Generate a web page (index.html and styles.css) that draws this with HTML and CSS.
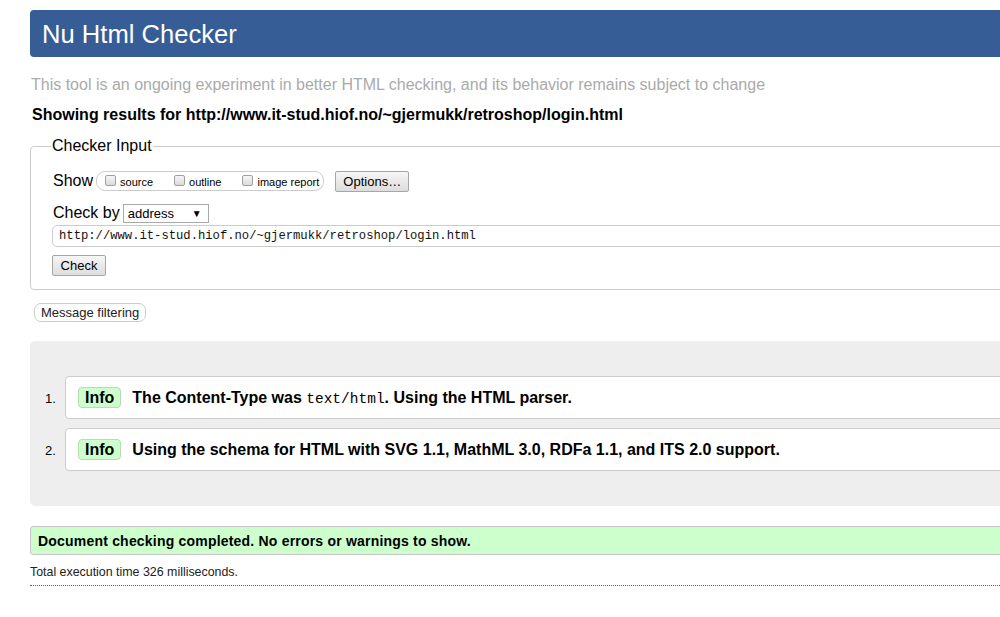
FILE: index.html
```html
<!DOCTYPE html>
<html>
<head>
<meta charset="utf-8">
<title>Nu Html Checker</title>
<link rel="stylesheet" href="styles.css">
</head>
<body>
<div class="page">
  <h1 class="title">Nu Html Checker</h1>
  <p class="subtitle">This tool is an ongoing experiment in better HTML checking, and its behavior remains subject to change</p>
  <p class="showing">Showing results for http://www.it-stud.hiof.no/~gjermukk/retroshop/login.html</p>

  <fieldset class="input-box">
    <legend class="legend">Checker Input</legend>
    <div class="row show-row">
      <span class="row-label">Show</span>
      <span class="pill">
        <label class="opt"><input type="checkbox" class="cb">source</label>
        <label class="opt"><input type="checkbox" class="cb">outline</label>
        <label class="opt"><input type="checkbox" class="cb">image report</label>
      </span>
      <button class="btn options-btn">Options…</button>
    </div>
    <div class="row checkby-row">
      <span class="row-label">Check by</span>
      <span class="select"><span class="select-text">address</span><span class="select-arrow">▼</span></span>
    </div>
    <div class="url-input">http://www.it-stud.hiof.no/~gjermukk/retroshop/login.html</div>
    <button class="btn check-btn">Check</button>
  </fieldset>

  <button class="filter-btn">Message filtering</button>

  <div class="results">
    <ol class="messages">
      <li class="msg"><span class="num">1.</span><div class="msg-box"><span class="badge">Info</span><span class="msg-text">The Content-Type was <code class="code">text/html</code>. Using the HTML parser.</span></div></li>
      <li class="msg"><span class="num">2.</span><div class="msg-box"><span class="badge">Info</span><span class="msg-text">Using the schema for HTML with SVG 1.1, MathML 3.0, RDFa 1.1, and ITS 2.0 support.</span></div></li>
    </ol>
  </div>

  <div class="success">Document checking completed. No errors or warnings to show.</div>
  <p class="exec-time">Total execution time 326 milliseconds.</p>
  <div class="dotted"></div>
</div>
</body>
</html>
```

FILE: styles.css
```css
html, body {
  margin: 0;
  padding: 0;
  background: #fff;
  overflow: hidden;
}
body {
  font-family: "Liberation Sans", Arial, sans-serif;
  color: #000;
}
.page {
  margin-left: 30px;
  width: 1040px;
  padding-top: 10px;
}
.title {
  margin: 0;
  height: 47px;
  line-height: 48px;
  padding-left: 12px;
  background: #365d95;
  color: #fff;
  font-size: 25.6px;
  font-weight: normal;
  border-radius: 4px;
}
.subtitle {
  margin: 18px 0 0 1px;
  font-size: 16px;
  line-height: 20px;
  color: #aaa;
}
.showing {
  margin: 10px 0 0 2px;
  font-size: 16px;
  line-height: 20px;
  font-weight: bold;
}
.input-box {
  margin: 12px 0 0 0;
  border: 1px solid #ccc;
  border-radius: 4px;
  padding: 8px 0 13px 22px;
}
.legend {
  padding: 0 1px;
  margin-left: -2px;
  font-size: 16px;
  line-height: 18px;
}
.row {
  display: flex;
  align-items: center;
}
.row-label {
  font-size: 16px;
}
.show-row {
  height: 22px;
  margin-top: 7px;
}
.pill {
  display: inline-flex;
  align-items: center;
  margin-left: 3px;
  height: 18px;
  border: 1px solid #ccc;
  border-radius: 9px;
  padding: 0 4px 0 8px;
  box-sizing: content-box;
}
.opt {
  display: inline-flex;
  align-items: center;
  font-size: 11px;
  margin-right: 21px;
  padding-top: 2px;
}
.opt:last-child {
  margin-right: 0;
}
.cb {
  -webkit-appearance: none;
  appearance: none;
  width: 11px;
  height: 11px;
  margin: 0 4px 4px 0;
  border: 1px solid #a0a0a0;
  border-radius: 2px;
  background: linear-gradient(#f6f6f6, #dadada);
}
.btn {
  font-family: "Liberation Sans", Arial, sans-serif;
  font-size: 13px;
  color: #000;
  background: linear-gradient(#f6f6f6, #dddddd);
  border: 1px solid #a6a6a6;
  border-radius: 2px;
  padding: 0 6px;
  height: 21px;
}
.options-btn {
  margin-left: 11px;
  width: 74px;
}
.checkby-row {
  margin-top: 11px;
  height: 20px;
}
.select {
  display: inline-flex;
  align-items: center;
  justify-content: space-between;
  margin-left: 3px;
  border: 1px solid #a9a9a9;
  font-size: 13px;
  padding: 0 6px 0 4px;
  box-sizing: border-box;
  width: 86px;
  height: 19px;
}
.select-arrow {
  font-size: 10px;
}
.url-input {
  margin: 2px 0 0 -1px;
  height: 20px;
  line-height: 21px;
  border: 1px solid #ccc;
  border-radius: 5px;
  padding-left: 6px;
  font-family: "Liberation Mono", "Courier New", monospace;
  font-size: 12.2px;
  color: #111;
}
.check-btn {
  display: block;
  margin: 8px 0 0 -1px;
  width: 54px;
  height: 21px;
}
.filter-btn {
  display: block;
  margin: 13px 0 0 4px;
  font-family: "Liberation Sans", Arial, sans-serif;
  font-size: 13px;
  color: #222;
  background: #fff;
  border: 1px solid #ccc;
  border-radius: 7px;
  height: 19px;
  padding: 0 6px;
}
.results {
  margin-top: 19px;
  background: #eee;
  border-radius: 5px;
  height: 165px;
  padding-top: 35px;
  box-sizing: border-box;
}
.messages {
  list-style: none;
  margin: 0;
  padding: 0;
}
.msg {
  display: flex;
  align-items: center;
  margin-bottom: 9px;
}
.num {
  width: 35px;
  padding-left: 15px;
  box-sizing: border-box;
  font-size: 13px;
  padding-top: 2px;
}
.msg-box {
  flex: 1;
  display: flex;
  align-items: center;
  height: 41px;
  background: #fff;
  border: 1px solid #ccc;
  border-radius: 4px;
  padding-left: 12px;
}
.badge {
  display: inline-block;
  background: #ccffcc;
  border: 1px solid #b5dcb5;
  border-radius: 4px;
  font-weight: bold;
  font-size: 16px;
  line-height: 19px;
  padding: 0 6px;
  margin-right: 11px;
}
.msg-text {
  font-weight: bold;
  font-size: 16px;
}
.code {
  font-family: "Liberation Mono", "Courier New", monospace;
  font-weight: normal;
  font-size: 14.5px;
}
.success {
  margin-top: 20px;
  height: 27px;
  line-height: 28px;
  background: #ccffcc;
  border: 1px solid #c4c4c4;
  border-radius: 3px;
  padding-left: 7px;
  font-weight: bold;
  font-size: 14px;
  letter-spacing: 0.2px;
}
.exec-time {
  margin: 10px 0 0 0;
  font-size: 12.4px;
  line-height: 14px;
  color: #222;
}
.dotted {
  margin-top: 6px;
  border-top: 1px dotted #666;
}
```
